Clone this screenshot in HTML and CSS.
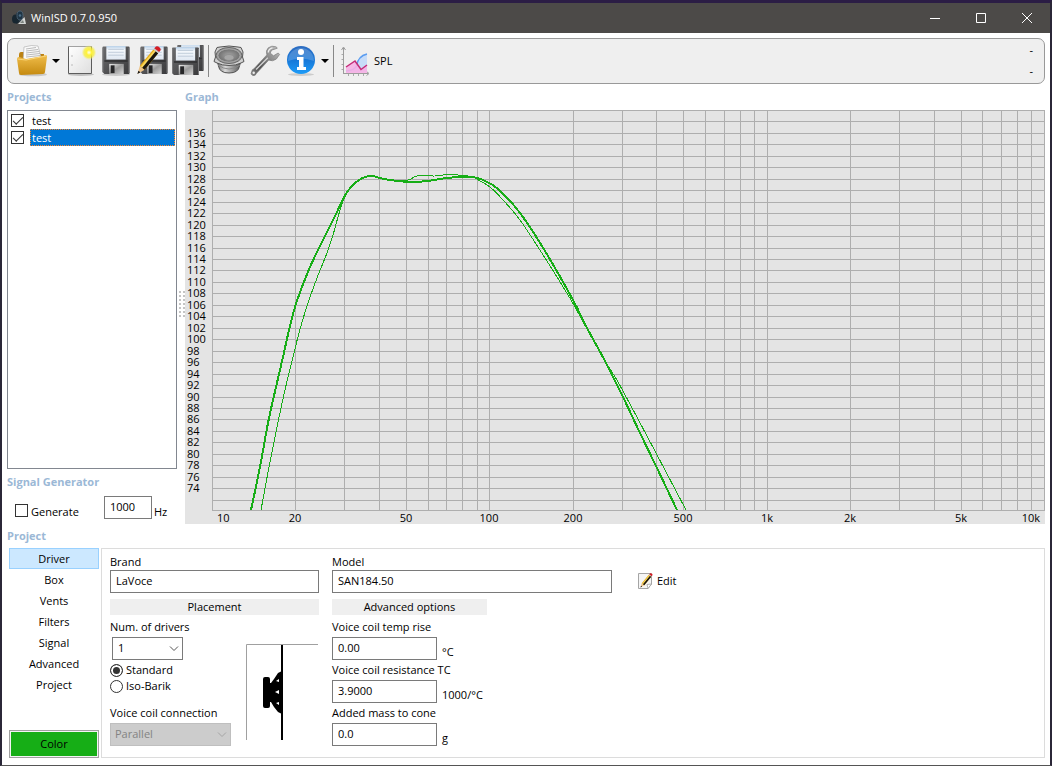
FILE: index.html
```html
<!DOCTYPE html>
<html lang="en">
<head>
    <meta charset="UTF-8">
    <meta name="viewport" content="width=device-width, initial-scale=1.0">
    <title>WinISD 0.7.0.950</title>
    <link rel="stylesheet" href="styles.css">
</head>
<body>

<!-- Shared gradients and the floppy shape -->
<svg class="defs" width="0" height="0" aria-hidden="true">
    <defs>
        <linearGradient id="gFolder" x1="0" y1="0" x2="0" y2="1">
            <stop offset="0" stop-color="#f0bd4a"/><stop offset="1" stop-color="#c58a10"/>
        </linearGradient>
        <linearGradient id="gPage" x1="0" y1="0" x2="1" y2="1">
            <stop offset="0" stop-color="#ffffff"/><stop offset="1" stop-color="#dedede"/>
        </linearGradient>
        <radialGradient id="gSun">
            <stop offset="0" stop-color="#fffef0"/><stop offset="0.35" stop-color="#fff23a"/>
            <stop offset="0.7" stop-color="#f7ee30" stop-opacity="0.7"/><stop offset="1" stop-color="#f7f28a" stop-opacity="0"/>
        </radialGradient>
        <linearGradient id="gDisk" x1="0" y1="0" x2="1" y2="1">
            <stop offset="0" stop-color="#6c6c6e"/><stop offset="1" stop-color="#3a3a3c"/>
        </linearGradient>
        <linearGradient id="gLabel" x1="0" y1="0" x2="0" y2="1">
            <stop offset="0" stop-color="#b8d0e8"/><stop offset="0.3" stop-color="#f4f8fc"/><stop offset="1" stop-color="#e0e8f2"/>
        </linearGradient>
        <linearGradient id="gMetal" x1="0" y1="0" x2="1" y2="1">
            <stop offset="0" stop-color="#eeeeee"/><stop offset="0.5" stop-color="#9a9a9a"/><stop offset="1" stop-color="#d6d6d6"/>
        </linearGradient>
        <linearGradient id="gRim" x1="0" y1="0" x2="1" y2="0">
            <stop offset="0" stop-color="#606060"/><stop offset="0.35" stop-color="#d8d8d8"/><stop offset="1" stop-color="#4c4c4c"/>
        </linearGradient>
        <radialGradient id="gCone">
            <stop offset="0" stop-color="#a8a8a8"/><stop offset="0.4" stop-color="#909090"/><stop offset="1" stop-color="#707070"/>
        </radialGradient>
        <linearGradient id="gWrench" x1="0" y1="1" x2="1" y2="0">
            <stop offset="0" stop-color="#888888"/><stop offset="0.3" stop-color="#4e4e4e"/><stop offset="0.6" stop-color="#888888"/><stop offset="1" stop-color="#c8c8c8"/>
        </linearGradient>
        <linearGradient id="gInfo" x1="0" y1="0" x2="0" y2="1">
            <stop offset="0" stop-color="#2d6cc0"/><stop offset="0.5" stop-color="#1878d8"/><stop offset="1" stop-color="#1c9cf8"/>
        </linearGradient>
        <symbol id="disk" viewBox="0 0 28 30">
            <path d="M0 1.5Q0 .5 1 .5H27Q28 .5 28 1.5V28Q28 29 27 29H2L0 27Z" fill="url(#gDisk)"/>
            <path d="M.5 2V27M27.5 2V28" stroke="#7c7c7e"/>
            <path d="M4 0H24V14H4Z" fill="url(#gLabel)"/>
            <path d="M6 3.5H22M6 6.5H22M6 9.5H22" stroke="#b4c2d2" stroke-width=".8"/>
            <path d="M2 15.5H26" stroke="#2e2e30" stroke-width="1.5"/>
            <path d="M7 18.5H22V29H7Z" fill="url(#gMetal)"/>
            <path d="M8.500 20H12.500V28H8.500Z" fill="#262628"/>
        </symbol>
        <symbol id="pencil" viewBox="0 0 26 30">
            <path d="M1 29L3.500 20.500L8.500 24.500Z" fill="#edc48a"/>
            <path d="M1 29L2 25.500L4.200 27.200Z" fill="#161616"/>
            <path d="M3.500 20.500L17.500 3.500L22.500 7.500L8.500 24.500Z" fill="#e7ab18"/>
            <path d="M4.600 21.200L18.500 4.300L20.500 6L6.600 23Z" fill="#f8d860"/>
            <path d="M6 22.500L20 5.500L22.500 7.500L8.500 24.500Z" fill="#191510"/>
            <path d="M17.500 3.500L18.800 1.900L23.800 5.900L22.500 7.500Z" fill="#c7c7c7"/>
            <path d="M18.500 2.300L20.200 .5Q22 -.2 24 1.500Q25.600 3.200 24.800 4.600L23.500 6.300Z" fill="#d41c24"/>
        </symbol>
    </defs>
</svg>

<div class="window">

    <!-- Title bar -->
    <header class="titlebar">
        <svg class="app-icon" width="16" height="16" viewBox="0 0 16 16" aria-hidden="true">
            <path d="M5 3L10 1L11 11L5 14Z" fill="#26333d"/>
            <ellipse cx="4.500" cy="9" rx="3.500" ry="4.500" fill="#172630"/>
            <ellipse cx="9" cy="5.500" rx="3" ry="4.500" fill="#1e3444" stroke="#5a7082" stroke-width=".7"/>
            <circle cx="9" cy="5.500" r="1.300" fill="#4b6d86"/>
            <path d="M7 14L13.500 7L15 14Z" fill="#d3d6d4"/>
            <path d="M9 13L12 10L13 13Z" fill="#7d8480"/>
        </svg>
        <h1>WinISD 0.7.0.950</h1>
        <button class="win-btn" aria-label="Minimize"><svg width="10" height="10" viewBox="0 0 10 10"><path d="M0 5.500H10"/></svg></button>
        <button class="win-btn" aria-label="Maximize"><svg width="10" height="10" viewBox="0 0 10 10"><path d="M.5 .5H9.500V9.500H.5Z"/></svg></button>
        <button class="win-btn" aria-label="Close"><svg width="10" height="10" viewBox="0 0 10 10"><path d="M0 0L10 10M10 0L0 10"/></svg></button>
    </header>

    <!-- Toolbar -->
    <nav class="toolbar">
        <button class="tool" aria-label="Open project">
            <svg width="32" height="32" viewBox="0 0 32 32">
                <ellipse cx="17" cy="29.500" rx="14" ry="1.800" fill="#c9c9c9"/>
                <path d="M3 10Q3 7 5 7H11L13 9H28V17H3Z" fill="#bb8112"/>
                <path d="M8 2Q16 -.5 22 1L26 16H7Z" fill="#fafafa" stroke="#aaa" stroke-width=".6"/>
                <path d="M10 4L20 2.500M10 6L22 4.500M10 8L23 6.500M10 10L24 8.500M10 12L24.500 10.500" stroke="#b3b3b3" stroke-width=".9"/>
                <path d="M1 14Q1 12 3 12L10 14L24 11.500L30 10Q31 10 31 12L29 27Q29 29 27 29L5 30Q3 30 3 28Z" fill="url(#gFolder)"/>
                <path d="M1.500 14L10 15L30 11" stroke="#f9d57a" fill="none"/>
            </svg>
        </button>
        <button class="drop" aria-label="Recent projects"><svg width="8" height="4" viewBox="0 0 8 4"><path d="M0 0H8L4 4Z"/></svg></button>
        <button class="tool" aria-label="New project">
            <svg width="32" height="32" viewBox="0 0 32 32">
                <ellipse cx="17" cy="29.500" rx="13" ry="1.500" fill="#c0c0c0"/>
                <path d="M4.500 1.500H27.500V28.500H4.500Z" fill="url(#gPage)" stroke="#5c5c5c"/>
                <path d="M4.500 1.500H27.500" stroke="#a2a2a2"/>
                <circle cx="8" cy="11" r=".8" fill="#b5b5b5"/><circle cx="8" cy="20" r=".8" fill="#b5b5b5"/>
                <circle cx="25" cy="7.500" r="7.500" fill="url(#gSun)"/>
            </svg>
        </button>
        <button class="tool" aria-label="Save">
            <svg width="32" height="32" viewBox="0 0 32 32">
                <ellipse cx="16" cy="29.500" rx="14" ry="1.500" fill="#c9c9c9"/>
                <use href="#disk" x="2" y="1" width="28" height="29"/>
            </svg>
        </button>
        <button class="tool" aria-label="Save as">
            <svg width="32" height="32" viewBox="0 0 32 32">
                <use href="#disk" x="4" y="1" width="28" height="29"/>
                <use href="#pencil" x="0" y="1" width="26" height="29"/>
            </svg>
        </button>
        <button class="tool" aria-label="Save all">
            <svg width="32" height="32" viewBox="0 0 32 32">
                <use href="#disk" x="5" y="-1" width="27" height="28"/>
                <use href="#disk" x="0" y="2" width="27" height="29"/>
            </svg>
        </button>
        <span class="sep"></span>
        <button class="tool" aria-label="Driver database">
            <svg width="32" height="32" viewBox="0 0 32 32">
                <path d="M3 12L5.500 21Q6.500 28 16 28Q25.500 28 26.500 21L29 12Z" fill="url(#gRim)" stroke="#505050"/>
                <path d="M5 20Q16 28 27 20" fill="none" stroke="#8a8a8a"/>
                <path d="M4 2.500L7 2Q16 0 25 2L28 2.500L30 7L29.500 12L31 16.500L28 18Q23 20.500 16 20.500Q9 20.500 4 18L1 16.500L2.500 12L2 7Z" fill="#d0d0d0" stroke="#555"/>
                <ellipse cx="16" cy="10.500" rx="13" ry="8" fill="#9c9c9c" stroke="#666"/>
                <ellipse cx="16" cy="10.500" rx="11" ry="6.500" fill="url(#gCone)" stroke="#b4b4b4" stroke-width=".6"/>
                <ellipse cx="16" cy="12.500" rx="5" ry="3" fill="#a6a6a6" stroke="#8a8a8a" stroke-width=".7"/>
            </svg>
        </button>
        <button class="tool" aria-label="Options">
            <svg width="32" height="32" viewBox="0 -1 32 34">
                <path d="M2 27Q0 30 3 31.500Q6 32 7 29L20 15Q24 17 28 14L31.500 9L30 7.500L25 10.500L21.500 7.500L23 4.500L29 2.500L28 1Q23 -1 19.500 2Q16.500 5 18 9.500L4 24.500Q2 25 2 27Z" fill="url(#gWrench)" stroke="#777" stroke-width=".7"/>
                <path d="M6.500 25L19 12.500" stroke="#d5d5d5" stroke-width="1.300"/>
                <path d="M19.500 7Q19.500 3 24 2" stroke="#eee" fill="none" stroke-width="1.500"/>
                <circle cx="4" cy="28.500" r="1.300" fill="#eee"/>
            </svg>
        </button>
        <button class="tool" aria-label="About">
            <svg width="32" height="32" viewBox="0 0 32 32">
                <ellipse cx="16" cy="29.500" rx="13" ry="1.500" fill="#ccc"/>
                <circle cx="16" cy="15" r="14" fill="url(#gInfo)"/>
                <path d="M3 16A13 13 0 0 1 29 16Q16 11 3 16Z" fill="#fff" opacity=".18"/>
                <circle cx="16" cy="7" r="3" fill="#fff"/>
                <path d="M12 12H18.500V22H21V25H12V22H14V15H12Z" fill="#fff"/>
            </svg>
        </button>
        <button class="drop" aria-label="More help"><svg width="8" height="4" viewBox="0 0 8 4"><path d="M0 0H8L4 4Z"/></svg></button>
        <span class="sep"></span>
        <button class="plot-btn">
            <svg width="32" height="32" viewBox="0 0 32 32" aria-hidden="true">
                <path d="M5.500 29V3M5 28.500H30M3.500 5L5.500 2L7.500 5M28.500 26.500L31 28.500L28.500 30.500" fill="none" stroke="#9c9c9c"/>
                <path d="M3.500 9.500H5M3.500 14.500H5M3.500 19.500H5M3.500 24.500H5M10.500 29V31M15.500 29V31M20.500 29V31M25.500 29V31" stroke="#aaa"/>
                <path d="M8 26Q18 25 19 20Q20 12 29 9V27H8Z" fill="#c7dcf8"/>
                <path d="M8 26Q17 25 18.500 21Q20 11 29 9" fill="none" stroke="#5a9cf0" stroke-width="1.500"/>
                <path d="M8 22L17 16L23 24.500L29 20V28H8Z" fill="#f6b0e4" opacity=".9"/>
                <path d="M8 22L17 16L23 24.500L29 20" fill="none" stroke="#c42c78" stroke-width="1.500"/>
            </svg>
            SPL
        </button>
        <div class="readout"><span>-</span><span>-</span></div>
    </nav>

    <main class="work">

        <!-- Left column: projects and signal generator -->
        <div class="side">
            <h2>Projects</h2>
            <div class="project-list">
                <div class="project">
                    <input type="checkbox" id="p1" checked>
                    <label for="p1">test</label>
                </div>
                <div class="project selected">
                    <input type="checkbox" id="p2" checked>
                    <label for="p2">test</label>
                </div>
            </div>
            <h2>Signal Generator</h2>
            <div class="generator">
                <input type="checkbox" id="gen">
                <label for="gen">Generate</label>
                <input type="text" class="field hz" id="freq" value="1000">
                <label for="freq" class="unit">Hz</label>
            </div>
        </div>

        <div class="splitter"></div>

        <!-- Graph -->
        <div class="graph">
            <h2>Graph</h2>
            <svg class="chart" id="chart" role="img" aria-label="SPL"></svg>
        </div>
    </main>

    <!-- Project settings -->
    <section class="settings">
        <h2>Project</h2>
        <div class="settings-body">
            <div class="tabs">
                <button class="tab active">Driver</button>
                <button class="tab">Box</button>
                <button class="tab">Vents</button>
                <button class="tab">Filters</button>
                <button class="tab">Signal</button>
                <button class="tab">Advanced</button>
                <button class="tab">Project</button>
                <button class="color-btn">Color</button>
            </div>

            <div class="panel">
                <div class="col placement">
                    <label for="brand">Brand</label>
                    <input type="text" class="field" id="brand" value="LaVoce">
                    <h3>Placement</h3>
                    <div class="placement-body">
                        <div class="placement-form">
                            <label for="num">Num. of drivers</label>
                            <div class="select num">
                                <select id="num"><option>1</option><option>2</option><option>4</option></select>
                                <svg width="10" height="6" viewBox="0 0 10 6"><path d="M1 .5L5 4.500L9 .5"/></svg>
                            </div>
                            <div class="radio">
                                <input type="radio" name="mount" id="std" checked>
                                <label for="std">Standard</label>
                            </div>
                            <div class="radio">
                                <input type="radio" name="mount" id="iso">
                                <label for="iso">Iso-Barik</label>
                            </div>
                            <label for="conn" class="conn-label">Voice coil connection</label>
                            <div class="select">
                                <select id="conn" disabled><option>Parallel</option></select>
                                <svg width="10" height="6" viewBox="0 0 10 6"><path d="M1 .5L5 4.500L9 .5"/></svg>
                            </div>
                        </div>
                        <svg class="box-view" width="73" height="96" viewBox="0 0 73 96" aria-hidden="true">
                            <path d="M.5 96V.5H72" fill="none" stroke="#a0a0a0"/>
                            <path d="M35 1H37V96H35Z"/>
                            <path d="M17 35Q17 33 19 33H22Q24 33 24 35V39H25L28 35L32 29L36 27V70L32 68L28 63L25 58H24V62Q24 64 22 64H19Q17 64 17 62Z"/>
                            <path d="M30 37L33 35V38ZM29 48L33 46V50ZM30 59L33 58V61Z" fill="#fff"/>
                        </svg>
                    </div>
                </div>

                <div class="col model">
                    <label for="model">Model</label>
                    <input type="text" class="field" id="model" value="SAN184.50">
                    <h3 class="adv">Advanced options</h3>
                    <label for="rise" class="row-label">Voice coil temp rise</label>
                    <div class="row"><input type="text" class="field" id="rise" value="0.00"><span>°C</span></div>
                    <label for="tc" class="row-label">Voice coil resistance TC</label>
                    <div class="row"><input type="text" class="field" id="tc" value="3.9000"><span>1000/°C</span></div>
                    <label for="mass" class="row-label">Added mass to cone</label>
                    <div class="row"><input type="text" class="field" id="mass" value="0.0"><span>g</span></div>
                </div>

                <button class="edit">
                    <svg width="16" height="16" viewBox="0 0 16 16" aria-hidden="true">
                        <path d="M.5 .5H13.500V11L10 15.500H.5Z" fill="#f5f5f5" stroke="#a5a5a5"/>
                        <path d="M10 15.500L9 11.500L13.500 11Z" fill="#fff" stroke="#999" stroke-width=".7"/>
                        <use href="#pencil" x="2" y="0" width="13" height="15"/>
                    </svg>
                    Edit
                </button>
            </div>
        </div>
    </section>
</div>

<script src="script.js"></script>
</body>
</html>
```
FILE: styles.css
```css
* {
    box-sizing: border-box;
}
body {
    margin: 0;
    background-color: #21183a;
    font-family: "Open Sans", "Noto Sans", sans-serif;
    font-size: 11px;
    line-height: 16px;
    color: #000;
}
button, input, select {
    font: inherit;
    color: inherit;
    margin: 0;
}
button {
    padding: 0;
    border: none;
    background: none;
}
.defs {
    position: absolute;
}
.window {
    display: flex;
    flex-direction: column;
    min-height: 100vh;
    border: 1px solid #555;
    border-width: 3px 2px 1px;
    border-color: #2b1d45 #2b2738 #555;
    background-color: #fff;
}

/* Title bar */
.titlebar {
    display: flex;
    align-items: center;
    height: 30px;
    padding-left: 9px;
    background-color: #4c4a48;
    color: #fff;
}
.titlebar h1 {
    flex: 1;
    margin: 0 0 0 4px;
    font-size: 11px;
    font-weight: normal;
}
.win-btn {
    display: flex;
    align-items: center;
    justify-content: center;
    width: 46px;
    height: 30px;
}
.win-btn svg {
    fill: none;
    stroke: #fff;
}

/* Toolbar */
.toolbar {
    display: flex;
    align-items: center;
    gap: 4px;
    height: 46px;
    margin: 5px 5px 0;
    padding: 0 8px 1px;
    border: 1px solid #999;
    border-radius: 7px;
    background-color: #efefef;
}
.tool svg, .plot-btn svg, .drop svg {
    display: block;
}
.drop {
    display: flex;
    justify-content: flex-end;
    width: 12px;
    margin-left: -4px;
}
.sep {
    width: 1px;
    height: 32px;
    background-color: #888;
}
.plot-btn {
    display: flex;
    align-items: center;
    gap: 4px;
}
.readout {
    display: flex;
    flex-direction: column;
    gap: 5px;
    margin-left: auto;
    padding-right: 3px;
}

/* Headings of the areas */
h2 {
    margin: 0;
    font-size: 11px;
    line-height: 26px;
    font-weight: bold;
    color: #9bb8d6;
}
h3 {
    margin: 6px 0 4px;
    font-size: 11px;
    line-height: 16px;
    font-weight: normal;
    text-align: center;
    background-color: #efefef;
}

/* Work area */
.work {
    flex: 1;
    display: flex;
    padding: 0 5px;
}
.side {
    display: flex;
    flex-direction: column;
    width: 170px;
}
.project-list {
    flex: 1;
    padding: 1px;
    border: 1px solid #828790;
}
.project {
    display: flex;
    align-items: center;
    gap: 6px;
    padding-left: 2px;
}
.project label {
    flex: 1;
    padding-left: 2px;
    line-height: 17px;
}
.project.selected label {
    background-color: #0078d7;
    color: #fff;
    outline: 1px dotted #ff8728;
    outline-offset: -1px;
}
.generator {
    display: flex;
    align-items: flex-end;
    height: 29px;
    padding: 0 0 4px 8px;
}
.generator label {
    margin-left: 3px;
}
.generator input[type="checkbox"] {
    margin-bottom: 3px;
}
.hz {
    width: 48px;
    margin: 0 0 1px auto;
}
.generator .unit {
    width: 23px;
    margin-left: 2px;
}
input[type="checkbox"] {
    appearance: none;
    display: grid;
    place-items: center;
    width: 13px;
    height: 13px;
    border: 1px solid #333;
    background-color: #fff;
}
input[type="checkbox"]:checked::after {
    content: "";
    width: 9px;
    height: 4px;
    margin-bottom: 2px;
    border: solid #333;
    border-width: 0 0 1px 1px;
    transform: rotate(-45deg);
}
.splitter {
    width: 8px;
    height: 29px;
    margin: 206px 0 0;
    background-image: radial-gradient(circle at 2px 2px, #c4c4c4 1px, transparent 1px);
    background-size: 4px 4px;
    background-position: 1px 0;
}

/* Graph */
.graph {
    flex: 1;
    display: flex;
    flex-direction: column;
    min-width: 0;
}
.chart {
    flex: 1;
    display: block;
    width: 100%;
    min-height: 300px;
    background-color: #e4e4e4;
}
.chart .grid {
    fill: none;
    stroke: #aeaeae;
    shape-rendering: crispEdges;
}
.chart .curve {
    fill: none;
    stroke: #16ae16;
    shape-rendering: crispEdges;
}
.chart .main {
    stroke-width: 2px;
}

/* Project settings */
.settings {
    padding: 0 5px 7px;
}
.settings h2 {
    line-height: 24px;
}
.settings-body {
    display: flex;
    gap: 2px;
}
.tabs {
    display: flex;
    flex-direction: column;
    width: 92px;
    padding-left: 2px;
}
.tab {
    height: 21px;
    border: 1px solid transparent;
}
.tab.active {
    border-color: #99d1ff;
    background-color: #cce8ff;
}
.color-btn {
    height: 28px;
    margin-top: auto;
    border: 1px solid #a0a0a0;
    background-color: #16ae16;
    box-shadow: inset 0 0 0 1px #f4f4f4;
}
.panel {
    flex: 1;
    display: flex;
    gap: 13px;
    padding: 5px 8px 9px;
    border: 1px solid #dcdcdc;
}
.col {
    display: flex;
    flex-direction: column;
}
.placement {
    width: 209px;
}
.model {
    width: 280px;
}
.field {
    height: 23px;
    padding: 0 5px 2px;
    border: 1px solid #7a7a7a;
    background-color: #fff;
}
.placement-body {
    display: flex;
    justify-content: space-between;
}
.placement-form {
    display: flex;
    flex-direction: column;
    width: 121px;
}
.box-view {
    margin-top: 25px;
}
.select {
    position: relative;
    height: 23px;
}
.select select {
    appearance: none;
    width: 100%;
    height: 23px;
    padding: 0 5px 1px;
    border: 1px solid #7a7a7a;
    border-radius: 0;
    background-color: #fff;
}
.select select:disabled {
    border-color: #bfbfbf;
    background-color: #ccc;
    color: #838383;
    opacity: 1;
    padding-left: 4px;
}
.select svg {
    position: absolute;
    right: 4px;
    top: 9px;
    fill: none;
    stroke: #555;
}
.select select:disabled + svg {
    stroke: #a4a4a4;
}
.select.num {
    width: 71px;
    margin: 2px 0 2px 2px;
}
.radio {
    display: flex;
    align-items: center;
    gap: 3px;
}
input[type="radio"] {
    appearance: none;
    width: 13px;
    height: 13px;
    border: 1px solid #333;
    border-radius: 50%;
    background-color: #fff;
}
input[type="radio"]:checked {
    background-color: #333;
    box-shadow: inset 0 0 0 2px #fff;
}
.conn-label {
    margin: 11px 0 2px;
}
.adv {
    width: 155px;
}
.row-label {
    margin-bottom: 2px;
}
.row {
    display: flex;
    align-items: flex-end;
    gap: 5px;
    margin-bottom: 2px;
}
.row .field {
    width: 105px;
}
.row span {
    line-height: 16px;
}
.edit {
    display: flex;
    align-items: center;
    align-self: flex-start;
    gap: 3px;
    margin: 19px 0 0 13px;
}
```
FILE: script.js
```js
// Size the curves are stored in: three decades wide, 140 dB at the top
const BASE_W = 832;
const BASE_H = 400;
const LEFT = 27;
const BOTTOM = 13;

const selected = [
    [39,400],[48,357],[56,313],[64,277],[71,247],[77,220],[83,197],[90,177],[98,157],
    [107,138],[115,122],[124,104],[132,87],[139,77],[147,70],
    [153,67],[160,66],[168,68],[178,70],[198,72],[215,71],[235,68],[248,67],[261,67],
    [271,70],[286,79],[308,103],[333,141],[361,190],[375,218],[393,251],[411,287],
    [428,323],[444,356],[465,400]
];
const other = [
    [49,400],[57,357],[65,317],[73,280],[80,251],[87,223],[95,196],[105,168],[115,143],
    [121,125],[126,107],[131,91],[135,83],[139,77],[147,70],[153,67],[160,66],[168,68],
    [178,70],[196,70],[205,66],[223,66],[231,65],[246,65],[261,67],[268,71],[278,77],
    [291,90],[308,110],[333,148],[359,190],[376,221],[393,251],[400,262],[411,281],
    [444,343],[474,400]
];

const chart = document.getElementById('chart');

function add(name, attrs, text) {
    const el = document.createElementNS('http://www.w3.org/2000/svg', name);
    for (const key in attrs) el.setAttribute(key, attrs[key]);
    if (text) el.textContent = text;
    chart.appendChild(el);
}

// Smooth path through all the points
function curvePath(points) {
    let d = 'M' + points[0].join(' ');
    for (let i = 0; i < points.length - 1; i++) {
        const a = points[i - 1] || points[i];
        const b = points[i];
        const c = points[i + 1];
        const e = points[i + 2] || c;
        d += `C${b[0] + (c[0] - a[0]) / 6} ${b[1] + (c[1] - a[1]) / 6} ` +
             `${c[0] - (e[0] - b[0]) / 6} ${c[1] - (e[1] - b[1]) / 6} ${c[0]} ${c[1]}`;
    }
    return d;
}

function draw() {
    const w = chart.clientWidth - LEFT - 1;
    const h = chart.clientHeight - BOTTOM - 1;
    chart.innerHTML = '';

    // Horizontal lines, every 2 dB
    let grid = `M${LEFT} ${h + 0.5}H${LEFT + w}`;
    for (let db = 140; db > 70; db -= 2) {
        const y = Math.round((140 - db) / 69.8 * h);
        grid += `M${LEFT} ${y + 0.5}H${LEFT + w}`;
        if (db <= 136 && db >= 74) add('text', { x: 2, y: y + 4 }, String(db));
    }

    // Vertical lines, log scale
    const named = { 10: '10', 20: '20', 50: '50', 100: '100', 200: '200', 500: '500',
                    1000: '1k', 2000: '2k', 5000: '5k', 10000: '10k' };
    for (let decade = 10; decade <= 10000; decade *= 10) {
        for (let n = 1; n < 10 && decade * n <= 10000; n++) {
            const hz = decade * n;
            const x = LEFT + Math.round(Math.log10(hz / 10) / 3 * w);
            grid += `M${x + 0.5} 0V${h + 1}`;
            if (hz === 10) add('text', { x: x + 5, y: h + 12 }, named[hz]);
            else if (hz === 10000) add('text', { x: x - 4, y: h + 12, 'text-anchor': 'end' }, named[hz]);
            else if (named[hz]) add('text', { x: x, y: h + 12, 'text-anchor': 'middle' }, named[hz]);
        }
    }
    add('path', { class: 'grid', d: grid });

    const fit = points => points.map(p => [LEFT + p[0] * w / BASE_W, p[1] * h / BASE_H]);
    add('path', { class: 'curve', d: curvePath(fit(other)) });
    add('path', { class: 'curve main', d: curvePath(fit(selected)) });
}

draw();
window.addEventListener('resize', draw);
```
